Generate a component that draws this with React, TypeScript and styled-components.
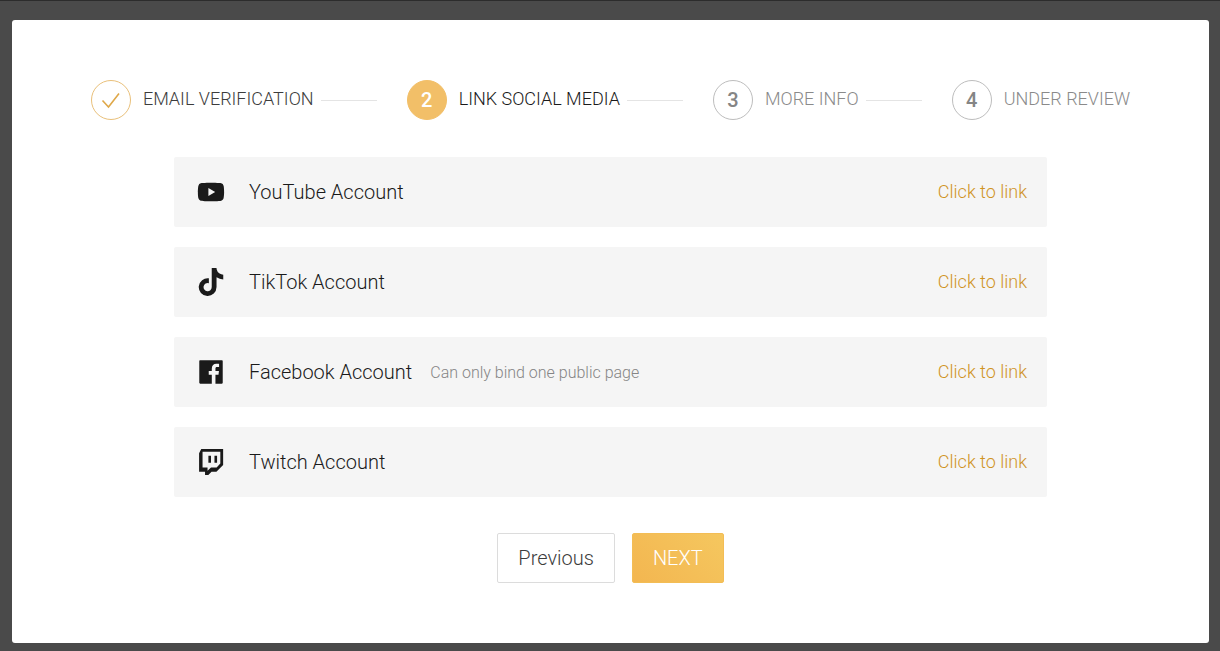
import React from "react";
import styled, { createGlobalStyle, css } from "styled-components";
import { AiFillFacebook, AiFillYoutube } from "react-icons/ai";
import { FaTiktok } from "react-icons/fa";

const GlobalStyle = createGlobalStyle`
  *, *::before, *::after { box-sizing: border-box; }
  body {
    margin: 0;
    background: #4a4a4a;
    font-family: Roboto, "Liberation Sans", sans-serif;
    font-weight: 300;
    color: #1a1a1a;
  }
`;

const Backdrop = styled.div`
  min-height: 100vh;
  display: flex;
  padding: 19px 11px 8px 12px;
  border-top: 1px solid #2c2c2c;
`;

const Dialog = styled.main`
  flex: 1;
  min-width: 0;
  display: flex;
  flex-direction: column;
  align-items: center;
  padding: 60px 24px;
  background: #fff;
  border-radius: 3px;
`;

type StepState = "done" | "current" | "todo";

const Steps = styled.ol`
  display: flex;
  align-items: center;
  margin: 0;
  padding: 0;
  list-style: none;
`;

const stepColors = {
  done: "#3c3c3c",
  current: "#1a1a1a",
  todo: "#8a8a8a",
};

const Step = styled.li<{ $state: StepState }>`
  display: flex;
  align-items: center;
  color: ${(p) => stepColors[p.$state]};
  white-space: nowrap;

  &:not(:last-child)::after {
    content: "";
    width: 56px;
    height: 1px;
    margin: 0 30px 0 7px;
    background: #e4e4e4;
  }
`;

const badgeStyles = {
  done: css`
    border-color: #e9c07a;
    color: #dfa849;
  `,
  current: css`
    border-color: #f2bf68;
    background: #f2bf68;
    color: #fff;
  `,
  todo: css`
    border-color: #bdbdbd;
    color: #858585;
  `,
};

const Badge = styled.span<{ $state: StepState }>`
  display: flex;
  align-items: center;
  justify-content: center;
  width: 40px;
  height: 40px;
  margin-right: 12px;
  border: 1px solid;
  border-radius: 50%;
  font-size: 20px;
  font-weight: 500;
  line-height: 24px;
  ${(p) => badgeStyles[p.$state]}
`;

const StepLabel = styled.span`
  padding-bottom: 2px;
  font-size: 18px;
  line-height: 24px;
`;

const Accounts = styled.ul`
  display: flex;
  flex-direction: column;
  gap: 20px;
  width: 100%;
  max-width: 873px;
  margin: 37px 0 36px;
  padding: 0;
  list-style: none;
`;

const Account = styled.li`
  display: flex;
  align-items: center;
  height: 70px;
  padding: 0 20px 0 22px;
  background: #f5f5f5;
  border-radius: 2px;
`;

const AccountIcon = styled.span`
  display: flex;
  justify-content: center;
  width: 30px;
  margin-right: 23px;
`;

const AccountName = styled.span`
  font-size: 20px;
  line-height: 24px;
`;

const Note = styled.span`
  margin-left: 18px;
  padding-top: 2px;
  color: #858585;
  font-size: 16px;
  line-height: 24px;
`;

const LinkAction = styled.a`
  margin-left: auto;
  color: #d0931f;
  font-size: 18px;
  line-height: 24px;
  text-decoration: none;
`;

const Actions = styled.div`
  display: flex;
  gap: 17px;
`;

const Button = styled.button<{ $primary?: boolean }>`
  height: 50px;
  padding: 0 20px;
  border: 1px solid #dcdcdc;
  border-radius: 2px;
  background: #fff;
  color: #3c3c3c;
  font: inherit;
  font-size: 20px;
  cursor: pointer;
  ${(p) =>
    p.$primary &&
    css`
      border-color: #f3bd55;
      background: linear-gradient(45deg, #f3b650, #f5c75f);
      color: #fff;
    `}
`;

const CheckIcon = () => (
  <svg width="20" height="18" viewBox="0 0 20 18" fill="none" aria-label="Completed">
    <path d="M1.5 9.5 7.5 16 18 2.5" stroke="currentColor" strokeWidth="1.6" />
  </svg>
);

const TwitchIcon = () => (
  <svg width="26" height="26" viewBox="0 0 24 24" fill="currentColor" aria-hidden="true">
    <path d="M3 0 1 4v17h5.5v3h3l3-3H17l6.2-6.2V0H3zm17.6 13.4L17.2 17H12l-3.2 3v-3H4.2V2.6h16.4v10.8zM17.6 6.2v6.6h-2.4V6.2h2.4zm-5.6 0v6.6H9.6V6.2H12z" />
  </svg>
);

const steps: { label: string; state: StepState }[] = [
  { label: "EMAIL VERIFICATION", state: "done" },
  { label: "LINK SOCIAL MEDIA", state: "current" },
  { label: "MORE INFO", state: "todo" },
  { label: "UNDER REVIEW", state: "todo" },
];

const accounts: { name: string; icon: React.ReactNode; note?: string }[] = [
  { name: "YouTube Account", icon: <AiFillYoutube size={30} /> },
  { name: "TikTok Account", icon: <FaTiktok size={28} /> },
  {
    name: "Facebook Account",
    icon: <AiFillFacebook size={30} />,
    note: "Can only bind one public page",
  },
  { name: "Twitch Account", icon: <TwitchIcon /> },
];

export default function App() {
  return (
    <>
      <GlobalStyle />
      <Backdrop>
        <Dialog>
          <Steps>
            {steps.map((step, i) => (
              <Step
                key={step.label}
                $state={step.state}
                aria-current={step.state === "current" ? "step" : undefined}
              >
                <Badge $state={step.state}>
                  {step.state === "done" ? <CheckIcon /> : i + 1}
                </Badge>
                <StepLabel>{step.label}</StepLabel>
              </Step>
            ))}
          </Steps>
          <Accounts>
            {accounts.map((account) => (
              <Account key={account.name}>
                <AccountIcon>{account.icon}</AccountIcon>
                <AccountName>{account.name}</AccountName>
                {account.note && <Note>{account.note}</Note>}
                <LinkAction href="#">Click to link</LinkAction>
              </Account>
            ))}
          </Accounts>
          <Actions>
            <Button type="button">Previous</Button>
            <Button type="button" $primary>
              NEXT
            </Button>
          </Actions>
        </Dialog>
      </Backdrop>
    </>
  );
}
